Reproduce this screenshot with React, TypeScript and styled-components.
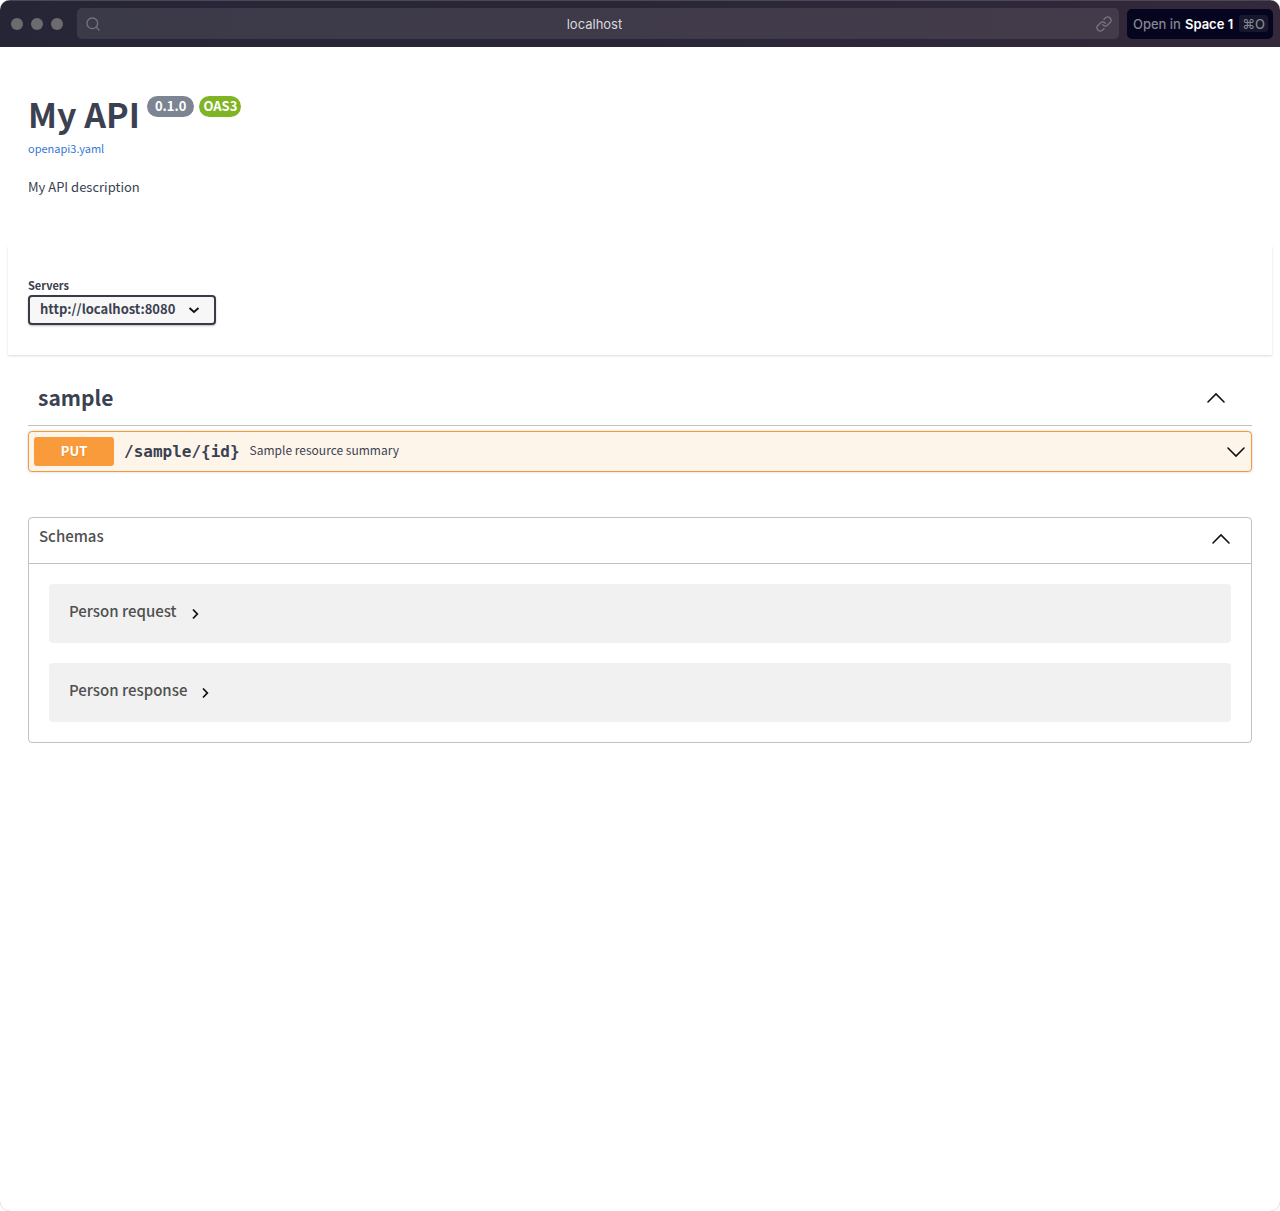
import React from "react";
import styled, { createGlobalStyle } from "styled-components";
import { Search } from "lucide-react";

const Global = createGlobalStyle`
  *, *::before, *::after { box-sizing: border-box; }
  body {
    margin: 0;
    background: #fff;
    color: #3b4151;
    font-family: "Noto Sans CJK KR", "Noto Sans", sans-serif;
  }
  h1, h2, h3, p { margin: 0; }
  button, input, select { font: inherit; color: inherit; }
  button { border: 0; padding: 0; background: none; cursor: pointer; text-align: left; }
`;

const Window = styled.div`
  min-height: 100vh;
  border-radius: 10px;
  overflow: hidden;
  background: #fff;
  box-shadow: 0 0 1px #999;
`;

const Toolbar = styled.header`
  display: flex;
  align-items: center;
  height: 47px;
  padding: 0 7px 1px 11px;
  background: linear-gradient(90deg, #262536, #2a2638 50%, #33293a);
  border-top: 1px solid #4a4756;
  font-family: Inter, sans-serif;
  font-size: 13px;
`;

const Lights = styled.div`
  display: flex;
  gap: 8px;
  margin-right: 14px;
`;

const Light = styled.span`
  width: 12px;
  height: 12px;
  border-radius: 50%;
  background: #6c6b70;
`;

const AddressBar = styled.label`
  display: flex;
  align-items: center;
  flex: 1;
  height: 31px;
  padding: 0 7px 0 8px;
  margin-right: 8px;
  border-radius: 5px;
  background: linear-gradient(90deg, #3b3a48, #3f3a4a 50%, #443b4a);
  color: #767480;
`;

const Address = styled.input`
  flex: 1;
  min-width: 0;
  border: 0;
  padding: 0 8px 0 0;
  outline: 0;
  background: none;
  color: #dad9dd;
  text-align: center;
`;

const OpenButton = styled.button`
  display: flex;
  align-items: center;
  gap: 4px;
  height: 30px;
  padding: 0 5px 0 6px;
  border-radius: 5px;
  background: #05051f;
  color: #85858f;
  font-weight: 500;
  white-space: nowrap;

  strong { color: #fff; font-weight: 600; }
`;

const Shortcut = styled.kbd`
  display: flex;
  align-items: center;
  height: 17px;
  padding: 0 3px;
  margin-left: 2px;
  border-radius: 3px;
  background: #17172d;
  font-family: inherit;
`;

const Info = styled.section`
  padding: 49px 28px;
`;

const TitleRow = styled.div`
  display: flex;
  align-items: flex-start;
  gap: 5px;
`;

const Title = styled.h1`
  margin-right: 2px;
  font-size: 34px;
  line-height: 36px;
  font-weight: 700;
`;

const Badge = styled.span<{ $color: string; $pad: number }>`
  height: 21px;
  padding: 0 ${(p) => p.$pad}px;
  border-radius: 11px;
  background: ${(p) => p.$color};
  color: #fff;
  font-size: 13px;
  line-height: 19px;
  font-weight: 700;
`;

const SpecLink = styled.a`
  display: block;
  width: fit-content;
  margin-top: 8px;
  color: #3578d4;
  font-size: 11px;
  line-height: 16px;
  text-decoration: none;
`;

const Description = styled.p`
  margin-top: 21px;
  font-size: 13px;
  line-height: 20px;
`;

const ServerPanel = styled.section`
  margin: 0 8px;
  padding: 30px 20px;
  box-shadow: 0 1px 2px rgba(0, 0, 0, 0.15);
`;

const ServerLabel = styled.label`
  display: block;
  width: fit-content;
  font-size: 11px;
  line-height: 19px;
  font-weight: 700;
`;

const SelectBox = styled.div`
  position: relative;
  width: 188px;

  svg { position: absolute; right: 16px; top: 9px; pointer-events: none; }
`;

const ServerSelect = styled.select`
  display: block;
  appearance: none;
  width: 100%;
  height: 30px;
  padding: 0 36px 4px 10px;
  border: 2px solid #383b48;
  border-radius: 4px;
  background: #f7f7f7;
  box-shadow: 0 1px 2px rgba(0, 0, 0, 0.25);
  font-size: 13px;
  font-weight: 700;
`;

const Operations = styled.section`
  margin: 15px 28px 0;
`;

const TagHeader = styled.button`
  display: flex;
  align-items: center;
  justify-content: space-between;
  width: 100%;
  height: 56px;
  padding: 0 26px 0 10px;
  border-bottom: 1px solid #bfc1c4;
  font-size: 21px;
  font-weight: 700;
`;

const TagName = styled.span`
  padding-bottom: 2px;
`;

const Operation = styled.button`
  display: flex;
  align-items: center;
  width: 100%;
  height: 41px;
  margin-top: 5px;
  padding: 0 5px;
  border: 1px solid #f7993a;
  border-radius: 4px;
  background: #fef5ea;
  box-shadow: 0 0 3px rgba(0, 0, 0, 0.19);
`;

const Method = styled.span`
  width: 80px;
  height: 29px;
  border-radius: 3px;
  background: #f99b3a;
  color: #fff;
  font-size: 13px;
  line-height: 27px;
  font-weight: 700;
  text-align: center;
  text-shadow: 0 1px 0 rgba(0, 0, 0, 0.1);
`;

const Path = styled.code`
  padding: 0 10px;
  font-family: "DejaVu Sans Mono", monospace;
  font-size: 16px;
  font-weight: 700;
`;

const Summary = styled.span`
  flex: 1;
  padding-bottom: 4px;
  font-size: 12px;
`;

const Schemas = styled.section`
  margin: 45px 28px 50px;
  border: 1px solid #c0c2c5;
  border-radius: 4px;
`;

const SchemasHeader = styled.button`
  display: flex;
  align-items: center;
  justify-content: space-between;
  width: 100%;
  height: 46px;
  padding: 0 20px 4px 10px;
  border-bottom: 1px solid #c0c2c5;
  color: #505050;
  font-size: 15px;
  font-weight: 500;
`;

const SchemaList = styled.div`
  display: flex;
  flex-direction: column;
  gap: 20px;
  padding: 20px;
`;

const Schema = styled.button`
  display: flex;
  align-items: center;
  gap: 12px;
  height: 59px;
  padding: 0 20px;
  border-radius: 4px;
  background: #f1f1f1;
  color: #505050;
  font-size: 15px;
  font-weight: 500;
`;

const RaisedLabel = styled.span`
  padding-bottom: 6px;
`;

function WideChevron({ down = false }: { down?: boolean }) {
  return (
    <svg width="20" height="20" viewBox="0 0 20 20" fill="none" stroke="#111" strokeWidth="1.6" strokeLinecap="round" aria-hidden="true">
      <path d={down ? "M2 6l8 8 8-8" : "M2 14l8-8 8 8"} />
    </svg>
  );
}

function SmallChevron({ down = false }: { down?: boolean }) {
  return (
    <svg width="12" height="12" viewBox="0 0 12 12" fill="none" stroke="#111" strokeWidth="1.8" aria-hidden="true">
      <path d={down ? "M1.5 4L6 8l4.500-4" : "M4 1.500L8.300 6 4 10.500"} />
    </svg>
  );
}

export default function App() {
  return (
    <Window>
      <Global />
      <Toolbar>
        <Lights><Light /><Light /><Light /></Lights>
        <AddressBar>
          <Search size={16} strokeWidth={2} />
          <Address aria-label="Address" defaultValue="localhost" />
          <svg width="16" height="16" viewBox="0 0 24 24" fill="none" stroke="currentColor" strokeWidth="2" strokeLinecap="round" strokeLinejoin="round" aria-hidden="true">
            <path d="M10 13a5 5 0 0 0 7.500.5l4-4a5 5 0 0 0-7-7l-2.500 2.500" />
            <path d="M14 11a5 5 0 0 0-7.500-.5l-4 4a5 5 0 0 0 7 7l2.500-2.500" />
          </svg>
        </AddressBar>
        <OpenButton type="button">
          <span>Open in</span>
          <strong>Space 1</strong>
          <Shortcut>⌘O</Shortcut>
        </OpenButton>
      </Toolbar>
      <main>
        <Info>
          <TitleRow>
            <Title>My API</Title>
            <Badge $color="#7d8492" $pad={8}>0.1.0</Badge>
            <Badge $color="#7fb424" $pad={4}>OAS3</Badge>
          </TitleRow>
          <SpecLink href="#openapi3.yaml">openapi3.yaml</SpecLink>
          <Description>My API description</Description>
        </Info>
        <ServerPanel>
          <ServerLabel htmlFor="server">Servers</ServerLabel>
          <SelectBox>
            <ServerSelect id="server">
              <option>http://localhost:8080</option>
            </ServerSelect>
            <SmallChevron down />
          </SelectBox>
        </ServerPanel>
        <Operations>
          <h2>
            <TagHeader type="button" aria-expanded="true">
              <TagName>sample</TagName>
              <WideChevron />
            </TagHeader>
          </h2>
          <Operation type="button" aria-expanded="false">
            <Method>PUT</Method>
            <Path>/sample/&#123;id&#125;</Path>
            <Summary>Sample resource summary</Summary>
            <WideChevron down />
          </Operation>
        </Operations>
        <Schemas>
          <h3>
            <SchemasHeader type="button" aria-expanded="true">
              <RaisedLabel>Schemas</RaisedLabel>
              <WideChevron />
            </SchemasHeader>
          </h3>
          <SchemaList>
            {["Person request", "Person response"].map((name) => (
              <Schema type="button" key={name} aria-expanded="false">
                <RaisedLabel>{name}</RaisedLabel>
                <SmallChevron />
              </Schema>
            ))}
          </SchemaList>
        </Schemas>
      </main>
    </Window>
  );
}
